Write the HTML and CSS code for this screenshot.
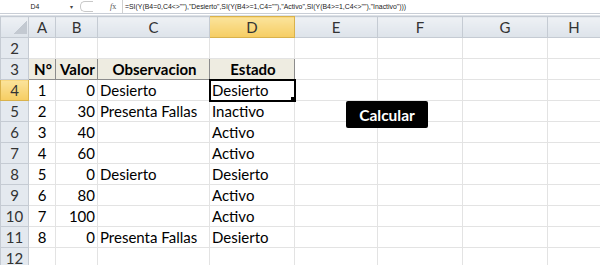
FILE: index.html
```html
<!DOCTYPE html>
<html lang="es">
<head>
  <meta charset="UTF-8">
  <title>Estado</title>
  <link rel="stylesheet" href="styles.css">
</head>
<body>
  <div class="fbar">
    <div class="namebox">D4</div>
    <div class="nb-arrow">&#9662;</div>
    <div class="nb-round"></div>
    <div class="fx"><i>f</i>x</div>
    <div class="formula">=SI(Y(B4=0,C4&lt;&gt;""),"Desierto",SI(Y(B4&gt;=1,C4=""),"Activo",SI(Y(B4&gt;=1,C4&lt;&gt;""),"Inactivo")))</div>
  </div>

  <div class="sheet">
    <table>
      <colgroup>
        <col style="width:28px"><col style="width:27px"><col style="width:42px"><col style="width:112px">
        <col style="width:85px"><col style="width:83px"><col style="width:85px"><col style="width:85px"><col style="width:53px">
      </colgroup>
      <tr class="colhead">
        <th class="corner"></th><th>A</th><th>B</th><th>C</th><th class="on">D</th><th>E</th><th>F</th><th>G</th><th>H</th>
      </tr>
      <tr><th class="rh">2</th><td></td><td></td><td></td><td></td><td></td><td></td><td></td><td></td></tr>
      <tr class="thead">
        <th class="rh">3</th><td class="hc">N°</td><td class="hc">Valor</td><td class="hc">Observacion</td><td class="hc">Estado</td><td></td><td></td><td></td><td></td>
      </tr>
      <tr><th class="rh on">4</th><td class="c">1</td><td class="n">0</td><td>Desierto</td><td class="sel">Desierto</td><td></td><td></td><td></td><td></td></tr>
      <tr><th class="rh">5</th><td class="c">2</td><td class="n">30</td><td>Presenta Fallas</td><td>Inactivo</td><td></td><td></td><td></td><td></td></tr>
      <tr><th class="rh">6</th><td class="c">3</td><td class="n">40</td><td></td><td>Activo</td><td></td><td></td><td></td><td></td></tr>
      <tr><th class="rh">7</th><td class="c">4</td><td class="n">60</td><td></td><td>Activo</td><td></td><td></td><td></td><td></td></tr>
      <tr><th class="rh">8</th><td class="c">5</td><td class="n">0</td><td>Desierto</td><td>Desierto</td><td></td><td></td><td></td><td></td></tr>
      <tr><th class="rh">9</th><td class="c">6</td><td class="n">80</td><td></td><td>Activo</td><td></td><td></td><td></td><td></td></tr>
      <tr><th class="rh">10</th><td class="c">7</td><td class="n">100</td><td></td><td>Activo</td><td></td><td></td><td></td><td></td></tr>
      <tr><th class="rh">11</th><td class="c">8</td><td class="n">0</td><td>Presenta Fallas</td><td>Desierto</td><td></td><td></td><td></td><td></td></tr>
      <tr><th class="rh">12</th><td></td><td></td><td></td><td></td><td></td><td></td><td></td><td></td></tr>
    </table>
    <button class="calc">Calcular</button>
  </div>
</body>
</html>
```

FILE: styles.css
```css
body {
  margin: 0;
  background: #fff;
  font-family: Lato, "Open Sans", sans-serif;
  overflow: hidden;
}
.fbar {
  display: flex;
  align-items: center;
  height: 13px;
  border-bottom: 1px solid #c9ced6;
  background: #fff;
  font-family: "Liberation Sans", sans-serif;
  font-size: 6.9px;
  color: #222;
}
.namebox {
  width: 70px;
  text-align: center;
  line-height: 13px;
}
.nb-arrow {
  width: 8px;
  font-size: 6px;
  color: #444;
}
.nb-round {
  width: 12px;
  height: 9px;
  margin-left: 2px;
  border: 1px solid #c8c8c8;
  border-radius: 5px 0 0 5px;
  border-right: none;
}
.fx {
  width: 12px;
  margin-left: 17px;
  font-family: "Liberation Serif", serif;
  font-size: 8px;
  color: #555;
  border-right: 1px solid #d0d0d0;
  height: 13px;
  line-height: 13px;
}
.formula {
  padding-left: 2px;
  white-space: nowrap;
}
.sheet {
  position: relative;
  margin-top: 1px;
  border-top: 1px solid #dde2e8;
}
table {
  border-collapse: collapse;
  table-layout: fixed;
  width: 600px;
}
td, th {
  padding: 0;
  height: 20px;
  border: 1px solid #e3e3e3;
  font-size: 15px;
  font-weight: normal;
  color: #000;
  white-space: nowrap;
  overflow: hidden;
  line-height: 20px;
}
.colhead th {
  height: 19px;
  background: linear-gradient(#eef1f5, #dde3ea);
  border: 1px solid #c5cbd3;
  color: #333;
  font-size: 15px;
  text-align: center;
}
.colhead th.on {
  background: linear-gradient(#fbe39b, #f6cd62);
  border-color: #d9b24c;
}
.corner {
  background: linear-gradient(135deg, transparent 58%, #c3c9d1 58%) 10px 2px / 16px 15px no-repeat,
    linear-gradient(#eef1f5, #dde3ea) !important;
}
th.rh {
  background: #e4e9ef;
  border: 1px solid #c5cbd3;
  color: #333;
  text-align: center;
}
th.rh.on {
  background: linear-gradient(#fbe39b, #f6cd62);
  border-color: #d9b24c;
}
td.hc {
  background: #eeece1;
  border: 1px solid #8c8c8c;
  font-weight: bold;
  text-align: center;
}
td {
  padding-left: 2px;
}
td.c {
  text-align: center;
  padding-left: 0;
}
td.n {
  text-align: right;
  padding-right: 2px;
}
td.sel {
  position: relative;
  outline: 2px solid #000;
  outline-offset: -1px;
}
td.sel::after {
  content: "";
  position: absolute;
  right: -3px;
  bottom: -3px;
  width: 5px;
  height: 5px;
  background: #000;
  border: 1px solid #fff;
}
.calc {
  position: absolute;
  left: 346px;
  top: 85px;
  width: 82px;
  height: 27px;
  background: #000;
  color: #fff;
  border: none;
  border-radius: 2px;
  font-family: Lato, "Open Sans", sans-serif;
  font-weight: bold;
  font-size: 15.5px;
}
```
